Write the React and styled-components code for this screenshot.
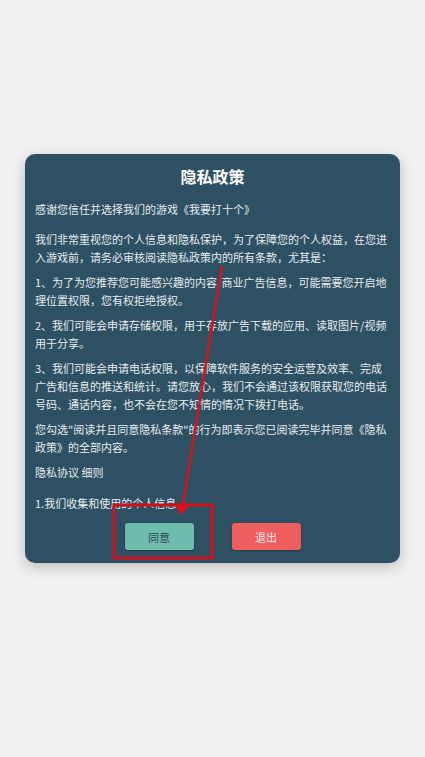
import React from "react";
import styled, { createGlobalStyle } from "styled-components";

const GlobalStyle = createGlobalStyle`
  html, body {
    margin: 0;
    padding: 0;
    background-color: #f1f1f1;
  }
  * {
    box-sizing: border-box;
  }
`;

const Page = styled.div`
  position: relative;
  width: 425px;
  height: 757px;
  padding: 154px 25px 0;
  font-family: "Noto Sans CJK SC", "Noto Sans", sans-serif;
`;

const Card = styled.div`
  width: 375px;
  background-color: #2e5063;
  border-radius: 10px;
  box-shadow: 0 4px 14px rgba(0, 0, 0, 0.22);
  padding: 10px 13px 13px 10px;
  display: flex;
  flex-direction: column;
`;

const Title = styled.h2`
  margin: 0 0 12px;
  font-size: 16px;
  line-height: 24px;
  font-weight: 700;
  color: #ffffff;
  text-align: center;
  padding-left: 3px;
`;

const Body = styled.div`
  display: flex;
  flex-direction: column;
  gap: 7px;
`;

const Para = styled.p`
  margin: 0 0 ${(p) => p.$after || 0}px;
  font-size: 11px;
  line-height: 18px;
  color: #e6ecef;
  word-break: break-all;
`;

const Actions = styled.div`
  display: flex;
  justify-content: center;
  gap: 38px;
  margin-top: 11px;
  padding-left: 3px;
`;

const Button = styled.button`
  width: 69px;
  height: 27px;
  border: none;
  border-radius: 3px;
  font-family: inherit;
  font-size: 11px;
  background-color: ${(p) => (p.$exit ? "#ef5e5e" : "#6dbcad")};
  color: ${(p) => (p.$exit ? "#fde8e8" : "#2b4d5c")};
  box-shadow: 0 1px 2px rgba(0, 0, 0, 0.25);
`;

const Markup = styled.svg`
  position: absolute;
  top: 0;
  left: 0;
  pointer-events: none;
`;

const paragraphs = [
  { text: "感谢您信任并选择我们的游戏《我要打十个》", after: 5 },
  { text: "我们非常重视您的个人信息和隐私保护，为了保障您的个人权益，在您进入游戏前，请务必审核阅读隐私政策内的所有条款，尤其是：" },
  { text: "1、为了为您推荐您可能感兴趣的内容/商业广告信息，可能需要您开启地理位置权限，您有权拒绝授权。" },
  { text: "2、我们可能会申请存储权限，用于存放广告下载的应用、读取图片/视频用于分享。" },
  { text: "3、我们可能会申请电话权限，以保障软件服务的安全运营及效率、完成广告和信息的推送和统计。请您放心，我们不会通过该权限获取您的电话号码、通话内容，也不会在您不知情的情况下拨打电话。" },
  { text: "您勾选\"阅读并且同意隐私条款\"的行为即表示您已阅读完毕并同意《隐私政策》的全部内容。" },
  { text: "隐私协议 细则", after: 6 },
  { text: "1.我们收集和使用的个人信息" },
];

export default function App() {
  return (
    <Page>
      <GlobalStyle />
      <Card>
        <Title>隐私政策</Title>
        <Body>
          {paragraphs.map((p, i) => (
            <Para key={i} $after={p.after}>
              {p.text}
            </Para>
          ))}
        </Body>
        <Actions>
          <Button>同意</Button>
          <Button $exit>退出</Button>
        </Actions>
      </Card>

      {/* red annotation drawn over the screenshot */}
      <Markup width="425" height="757" viewBox="0 0 425 757">
        <line x1="222" y1="266" x2="182.5" y2="506" stroke="#d8121c" strokeWidth="2.5" />
        <polygon points="174,503 190,505 181,515" fill="#e0101a" />
        <rect x="114" y="505" width="98" height="53" fill="none" stroke="#d0101a" strokeWidth="3" />
      </Markup>
    </Page>
  );
}
